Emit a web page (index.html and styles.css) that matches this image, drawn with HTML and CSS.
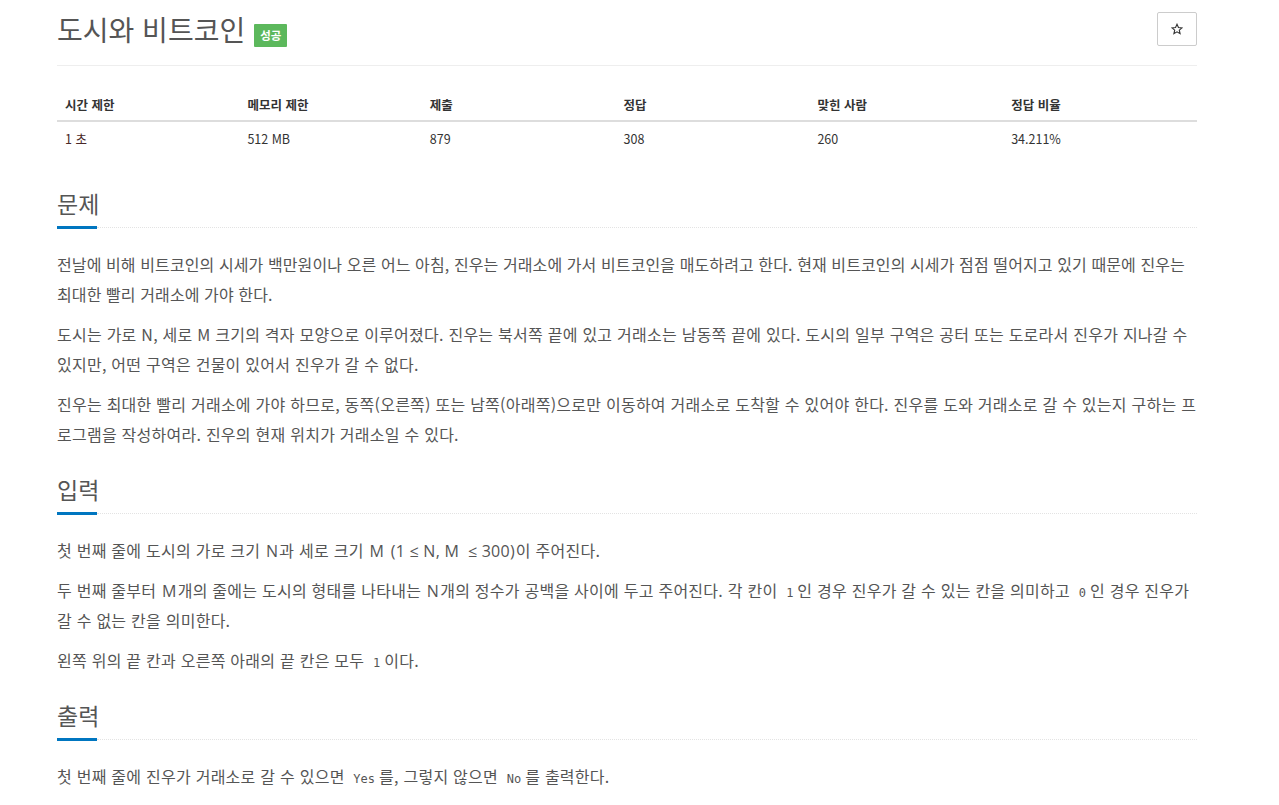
FILE: index.html
```html
<!DOCTYPE html>
<html lang="ko">
<head>
<meta charset="utf-8">
<title>도시와 비트코인</title>
<link rel="stylesheet" href="styles.css">
</head>
<body>
<div class="page">
  <div class="page-header">
    <h1 class="title">도시와 비트코인 <span class="badge">성공</span></h1>
    <button class="star-btn" aria-label="즐겨찾기">
      <svg width="12" height="12" viewBox="0 0 24 24"><path d="M12 2.5l2.9 6.6 7.1.6-5.4 4.7 1.6 7-6.2-3.7-6.2 3.7 1.6-7L2 9.7l7.1-.6z" fill="none" stroke="#333" stroke-width="2.2" stroke-linejoin="miter"/></svg>
    </button>
  </div>

  <table class="info">
    <thead>
      <tr><th class="w16">시간 제한</th><th class="w16">메모리 제한</th><th class="w17">제출</th><th class="w17">정답</th><th class="w17">맞힌 사람</th><th class="w17">정답 비율</th></tr>
    </thead>
    <tbody>
      <tr><td class="time">1 초</td><td>512 MB</td><td>879</td><td>308</td><td>260</td><td>34.211%</td></tr>
    </tbody>
  </table>

  <section class="section">
    <div class="headline"><h2>문제</h2></div>
    <div class="rule"><span class="rule-accent"></span><span class="rule-dots"></span></div>
    <div class="text">
      <p class="compact">전날에 비해 비트코인의 시세가 백만원이나 오른 어느 아침, 진우는 거래소에 가서 비트코인을 매도하려고 한다. 현재 비트코인의 시세가 점점 떨어지고 있기 때문에 진우는 최대한 빨리 거래소에 가야 한다.</p>
      <p>도시는 가로 N, 세로 M 크기의 격자 모양으로 이루어졌다. 진우는 북서쪽 끝에 있고 거래소는 남동쪽 끝에 있다. 도시의 일부 구역은 공터 또는 도로라서 진우가 지나갈 수 있지만, 어떤 구역은 건물이 있어서 진우가 갈 수 없다.</p>
      <p>진우는 최대한 빨리 거래소에 가야 하므로, 동쪽(오른쪽) 또는 남쪽(아래쪽)으로만 이동하여 거래소로 도착할 수 있어야 한다. 진우를 도와 거래소로 갈 수 있는지 구하는 프로그램을 작성하여라. 진우의 현재 위치가 거래소일 수 있다.</p>
    </div>
  </section>

  <section class="section">
    <div class="headline"><h2>입력</h2></div>
    <div class="rule"><span class="rule-accent"></span><span class="rule-dots"></span></div>
    <div class="text">
      <p>첫 번째 줄에 도시의 가로 크기 <span class="math">N</span>과 세로 크기 <span class="math">M</span> <span class="math">(1 ≤ N, M &nbsp;≤ 300)</span>이 주어진다.</p>
      <p>두 번째 줄부터 <span class="math">M</span>개의 줄에는 도시의 형태를 나타내는 <span class="math">N</span>개의 정수가 공백을 사이에 두고 주어진다. 각 칸이 <code>1</code>인 경우 진우가 갈 수 있는 칸을 의미하고 <code>0</code>인 경우 진우가 갈 수 없는 칸을 의미한다.</p>
      <p>왼쪽 위의 끝 칸과 오른쪽 아래의 끝 칸은 모두 <code>1</code>이다.</p>
    </div>
  </section>

  <section class="section">
    <div class="headline"><h2>출력</h2></div>
    <div class="rule"><span class="rule-accent"></span><span class="rule-dots"></span></div>
    <div class="text">
      <p>첫 번째 줄에 진우가 거래소로 갈 수 있으면 <code>Yes</code>를, 그렇지 않으면 <code>No</code>를 출력한다.</p>
    </div>
  </section>
</div>
</body>
</html>
```

FILE: styles.css
```css
html, body {
  margin: 0;
  padding: 0;
  background: #fff;
}

body {
  font-family: "Open Sans", "Noto Sans CJK KR", sans-serif;
  color: #333;
}

.page {
  width: 1140px;
  margin-left: 57px;
}

.page-header {
  display: flex;
  align-items: center;
  justify-content: space-between;
  padding: 12px 0 19px;
  border-bottom: 1px solid #eee;
}

.title {
  margin: 0;
  font-family: "Noto Sans CJK KR", sans-serif;
  font-weight: 400;
  font-size: 28px;
  line-height: 34px;
  color: #555;
  display: flex;
  align-items: flex-end;
  gap: 9px;
}

.badge {
  display: inline-block;
  background: #5cb85c;
  color: #fff;
  font-size: 11.5px;
  font-weight: 700;
  line-height: 23px;
  height: 23px;
  padding: 0 6px;
  border-radius: 1px;
  margin-bottom: -1px;
}

.star-btn {
  width: 40px;
  height: 34px;
  border: 1px solid #ccc;
  border-radius: 2px;
  background: #fff;
  display: flex;
  align-items: center;
  justify-content: center;
  padding: 0;
}

.info {
  width: 100%;
  border-collapse: collapse;
  margin-top: 20px;
  font-size: 12.5px;
  font-family: "Noto Sans CJK KR", sans-serif;
}

.info th {
  text-align: left;
  font-weight: 700;
  padding: 9px 8px 5px;
  line-height: 20px;
  border-bottom: 2px solid #ddd;
  color: #333;
}

.info td {
  padding: 7px 8px 6px;
  line-height: 20px;
  color: #333;
}

.info td.time {
  color: #4a2828;
}

.w16 { width: 16%; }
.w17 { width: 17%; }

.section {
  margin-top: 33px;
}

.section + .section {
  margin-top: 25px;
}

.headline h2 {
  margin: 0;
  font-family: "Noto Sans CJK KR", sans-serif;
  font-weight: 400;
  font-size: 23px;
  line-height: 30px;
  color: #555;
}

.rule {
  display: flex;
  align-items: center;
  margin-top: 8px;
  height: 3px;
}

.rule-accent {
  width: 40px;
  height: 3px;
  background: #0076c0;
}

.rule-dots {
  flex: 1;
  border-bottom: 1px dotted #e3e3e3;
}

.text {
  margin-top: 20px;
  font-family: "Noto Sans CJK KR", sans-serif;
  font-size: 16px;
  letter-spacing: 0.25px;
  line-height: 30px;
  color: #555;
}

.text p {
  margin: 0 0 10px;
}

.text p.compact {
  letter-spacing: 0.1px;
}

.math {
  font-family: "Open Sans", "Noto Sans CJK KR", sans-serif;
  padding: 0 1px;
  line-height: 1;
}

code {
  font-family: "DejaVu Sans Mono", "Liberation Mono", monospace;
  font-size: 12px;
  letter-spacing: 0;
  padding: 2px 4px;
  line-height: 1;
  color: #555;
}
```
